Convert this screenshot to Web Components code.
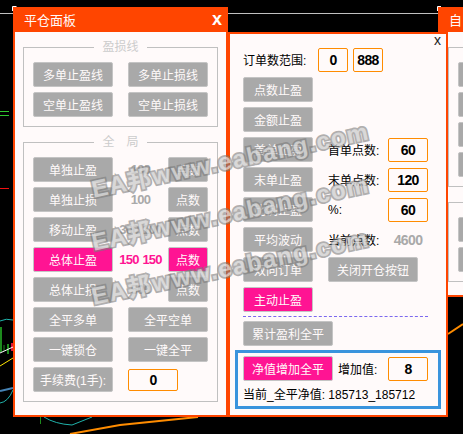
<!DOCTYPE html>
<html lang="zh">
<head>
<meta charset="utf-8">
<title>平仓面板</title>
<style>
html, body { margin: 0; padding: 0; width: 463px; height: 434px; overflow: hidden; background: #000; }
body { position: relative; font: 12px "Liberation Sans", "Noto Sans CJK SC", sans-serif; }
</style>
</head>
<body>
<chart-bg></chart-bg>

<ea-window title="自" style="left:438px;top:7px;width:25px;height:290px;border-right:0;">
    <ea-group>
        <ea-row><ea-btn w="80"></ea-btn></ea-row>
        <ea-row><ea-btn w="80"></ea-btn></ea-row>
        <ea-row><ea-btn w="80"></ea-btn></ea-row>
        <ea-row><ea-btn w="80"></ea-btn></ea-row>
    </ea-group>
    <ea-group>
        <ea-row><ea-btn w="80"></ea-btn></ea-row>
        <ea-row><ea-btn w="80"></ea-btn></ea-row>
    </ea-group>
</ea-window>

<ea-window title="平仓面板" closer="x" style="left:13px;top:7px;width:215px;height:410px;">
    <ea-group legend="盈损线">
        <ea-row><ea-btn w="80">多单止盈线</ea-btn><ea-btn w="80">多单止损线</ea-btn></ea-row>
        <ea-row><ea-btn w="80">空单止盈线</ea-btn><ea-btn w="80">空单止损线</ea-btn></ea-row>
    </ea-group>
    <ea-group legend="全　局">
        <ea-row><ea-btn w="80">单独止盈</ea-btn><ea-val>100</ea-val><ea-btn w="40">点数</ea-btn></ea-row>
        <ea-row><ea-btn w="80">单独止损</ea-btn><ea-val>100</ea-val><ea-btn w="40">点数</ea-btn></ea-row>
        <ea-row><ea-btn w="80">移动止盈</ea-btn><ea-val>300 100</ea-val><ea-btn w="40">点数</ea-btn></ea-row>
        <ea-row><ea-btn w="80" on>总体止盈</ea-btn><ea-val on>150 150</ea-val><ea-btn w="40" on>点数</ea-btn></ea-row>
        <ea-row><ea-btn w="80">总体止损</ea-btn><ea-val>500</ea-val><ea-btn w="40">点数</ea-btn></ea-row>
        <ea-row><ea-btn w="80">全平多单</ea-btn><ea-btn w="80">全平空单</ea-btn></ea-row>
        <ea-row><ea-btn w="80">一键锁仓</ea-btn><ea-btn w="80">一键全平</ea-btn></ea-row>
        <ea-row><ea-btn w="80">手续费(1手):</ea-btn><ea-num w="50" h="22">0</ea-num></ea-row>
    </ea-group>
</ea-window>

<ea-side style="left:228px;top:32px;width:220px;height:385px;">
    <ea-row><ea-label w="60">订单数范围:</ea-label><ea-num w="30">0</ea-num><ea-num w="30" style="margin-left:-10px">888</ea-num></ea-row>
    <ea-row><ea-btn w="70">点数止盈</ea-btn></ea-row>
    <ea-row><ea-btn w="70">金额止盈</ea-btn></ea-row>
    <ea-row><ea-btn w="70">首单止盈</ea-btn><ea-label w="45">首单点数:</ea-label><ea-num w="40">60</ea-num></ea-row>
    <ea-row><ea-btn w="70">末单止盈</ea-btn><ea-label w="45">末单点数:</ea-label><ea-num w="40">120</ea-num></ea-row>
    <ea-row><ea-btn w="70">比例止盈</ea-btn><ea-label w="45">%:</ea-label><ea-num w="40">60</ea-num></ea-row>
    <ea-row><ea-btn w="70">平均波动</ea-btn><ea-label w="45">当前点数:</ea-label><ea-val style="flex:none;width:40px;margin:0;font-size:14px;letter-spacing:-.6px">4600</ea-val></ea-row>
    <ea-row><ea-btn w="70">双向订单</ea-btn><ea-btn w="90">关闭开仓按钮</ea-btn></ea-row>
    <ea-row><ea-btn w="70" on>主动止盈</ea-btn></ea-row>
    <ea-dash></ea-dash>
    <ea-row><ea-btn w="90">累计盈利全平</ea-btn></ea-row>
    <ea-bluebox>
        <ea-row style="gap:5px"><ea-btn w="90" on>净值增加全平</ea-btn><ea-label w="45">增加值:</ea-label><ea-num w="40">8</ea-num></ea-row>
        <ea-row><ea-label w="190">当前_全平净值: 185713_185712</ea-label></ea-row>
    </ea-bluebox>
</ea-side>

<ea-watermark></ea-watermark>

<script>
// fondo del grafico: solo lineas sueltas alrededor de los paneles
customElements.define("chart-bg", class extends HTMLElement {
    connectedCallback() {
        this.attachShadow({ mode: 'open' }).innerHTML = `
            <style>
                :host { position: absolute; left: 0; top: 0; width: 463px; height: 434px; display: block; }
                svg { display: block; }
            </style>
            <svg width="463" height="434" viewBox="0 0 463 434" fill="none">
                <path d="M0 13.5H438" stroke="#c0c0c0"/>
                <path d="M12.5 11V6.5H16.5M437.5 11V6.5H441" stroke="#fff"/>
                <path d="M0 111.5H9M0 115.5H9" stroke="#2fc52f"/>
                <path d="M0 188.5H9" stroke="#f01010"/>
                <path d="M0 321 Q6 318 13 320" stroke="#20b2aa"/>
                <path d="M1 327V352M8 344V354" stroke="#1d8a1d" stroke-width="2"/>
                <path d="M4 345V351" stroke="#1d8a1d"/>
                <path d="M12 343V351" stroke="#dc143c" stroke-width="2"/>
                <path d="M0 353L13 347" stroke="#fff"/>
                <path d="M0 366L13 358" stroke="#ffe600"/>
                <path d="M0 391L13 388" stroke="#4682b4" stroke-width="2"/>
                <path d="M0 403Q8 402 13 390" stroke="#20b2aa"/>
                <path d="M40.5 417V424" stroke="#1d8a1d"/>
                <path d="M44 417Q55 424 72 425L92 417" stroke="#20b2aa"/>
                <path d="M70 434L120 425L198 417" stroke="#ff8c00" stroke-width="2"/>
                <path d="M448 334L463 324" stroke="#ff8c00" stroke-width="2"/>
            </svg>`;
    }
});

customElements.define("ea-window", class extends HTMLElement {
    connectedCallback() {
        const titulo = this.getAttribute("title") || "";
        const closer = this.getAttribute("closer") || "";
        this.removeAttribute("title");
        this.attachShadow({ mode: 'open' }).innerHTML = `
            <style>
                :host { position: absolute; display: flex; flex-direction: column; box-sizing: border-box; background: #fffafa; border: 2px solid #ff4500; border-top: 0; overflow: hidden; }
                .bar { flex: none; height: 25px; margin: 0 -2px; padding: 0 6px 0 11px; background: #ff4500; color: #fffafa; display: flex; align-items: center; justify-content: space-between; font-size: 13px; white-space: nowrap; }
                .x { font: bold 18px "Liberation Sans", sans-serif; color: #fff; line-height: 25px; }
                .body { flex: 1; display: flex; flex-direction: column; gap: 7px; padding: 7px 8px 0; }
            </style>
            <div class="bar"><span>${titulo}</span><span class="x">${closer}</span></div>
            <div class="body"><slot></slot></div>`;
    }
});

customElements.define("ea-side", class extends HTMLElement {
    connectedCallback() {
        this.attachShadow({ mode: 'open' }).innerHTML = `
            <style>
                :host { position: absolute; display: flex; flex-direction: column; gap: 5px; box-sizing: border-box; padding: 13px 0 0 13px; background: #fffafa; border: 2px solid #ff4500; }
                .x { position: absolute; right: 5px; top: -1px; font: 14px/14px "Liberation Sans", sans-serif; color: #222; }
            </style>
            <span class="x">x</span>
            <slot></slot>`;
    }
});

customElements.define("ea-group", class extends HTMLElement {
    connectedCallback() {
        const legend = this.getAttribute("legend") || "";
        this.attachShadow({ mode: 'open' }).innerHTML = `
            <style>
                :host { display: block; width: 195px; flex: none; }
                fieldset { margin: 0; padding: 7px 9px 9px; border: 1px solid #c0c0c0; display: flex; flex-direction: column; gap: 5px; min-width: 0; }
                legend { margin: 0 auto; padding: 0 8.5px; height: 16px; line-height: 16px; min-width: 36px; font-size: 12px; color: #ccc; }
            </style>
            <fieldset><legend>${legend}</legend><slot></slot></fieldset>`;
    }
});

customElements.define("ea-row", class extends HTMLElement {
    connectedCallback() {
        this.attachShadow({ mode: 'open' }).innerHTML = `
            <style>
                :host { display: flex; align-items: center; gap: 15px; height: 25px; flex: none; }
            </style>
            <slot></slot>`;
    }
});

customElements.define("ea-btn", class extends HTMLElement {
    connectedCallback() {
        const w = this.getAttribute("w") || 80;
        const on = this.hasAttribute("on");
        this.attachShadow({ mode: 'open' }).innerHTML = `
            <style>
                :host { display: flex; align-items: center; justify-content: center; box-sizing: border-box; flex: none; width: ${w}px; height: 25px; border: 1px solid #c4c4c4; border-radius: 2px; background: ${on ? "#ff1493" : "#a9a9a9"}; color: #fffafa; font-size: 12px; white-space: nowrap; }
            </style>
            <slot></slot>`;
    }
});

customElements.define("ea-val", class extends HTMLElement {
    connectedCallback() {
        const on = this.hasAttribute("on");
        this.attachShadow({ mode: 'open' }).innerHTML = `
            <style>
                :host { display: block; flex: 1; margin: 0 -15px; text-align: center; font-weight: bold; font-size: 13px; letter-spacing: -.8px; word-spacing: 1px; white-space: nowrap; color: ${on ? "#ff1493" : "#a9a9a9"}; }
            </style>
            <slot></slot>`;
    }
});

customElements.define("ea-num", class extends HTMLElement {
    connectedCallback() {
        const w = this.getAttribute("w") || 40;
        const h = this.getAttribute("h") || 24;
        this.attachShadow({ mode: 'open' }).innerHTML = `
            <style>
                :host { display: flex; align-items: center; justify-content: center; box-sizing: border-box; flex: none; width: ${w}px; height: ${h}px; border: 1px solid #ff8c00; border-radius: 2px; background: #fffafa; color: #000; font-size: 14px; letter-spacing: -.6px; font-weight: bold; }
            </style>
            <slot></slot>`;
    }
});

customElements.define("ea-label", class extends HTMLElement {
    connectedCallback() {
        const w = this.getAttribute("w") || 45;
        this.attachShadow({ mode: 'open' }).innerHTML = `
            <style>
                :host { display: block; flex: none; width: ${w}px; color: #000; font-size: 12px; white-space: nowrap; }
            </style>
            <slot></slot>`;
    }
});

customElements.define("ea-dash", class extends HTMLElement {
    connectedCallback() {
        this.attachShadow({ mode: 'open' }).innerHTML = `
            <style>
                :host { display: block; flex: none; width: 185px; height: 0; margin: -1px 0; border-top: 1px dashed #7b68ee; }
            </style>`;
    }
});

customElements.define("ea-bluebox", class extends HTMLElement {
    connectedCallback() {
        this.attachShadow({ mode: 'open' }).innerHTML = `
            <style>
                :host { display: block; flex: none; box-sizing: border-box; width: 206px; height: 59px; margin: -1px 0 0 -8px; padding: 3px 5px 0; border: 3px solid #3a94dd; background: #fffafa; }
            </style>
            <slot></slot>`;
    }
});

customElements.define("ea-watermark", class extends HTMLElement {
    connectedCallback() {
        const linea = (y) => `<span class="ln" style="top:${y}px">EA邦www.eabang.com</span>`;
        this.attachShadow({ mode: 'open' }).innerHTML = `
            <style>
                :host { position: absolute; left: 0; top: 0; width: 463px; height: 434px; display: block; pointer-events: none; overflow: hidden; }
                .ln { position: absolute; left: 92px; margin-top: -15px; transform-origin: 0 50%; transform: rotate(-12deg); font: bold 24px/30px "Liberation Sans", "Noto Sans CJK SC", sans-serif; letter-spacing: 1.4px; white-space: nowrap; color: rgba(245,245,245,.6); -webkit-text-stroke: 3.5px rgba(125,125,125,.6); paint-order: stroke fill; }
            </style>
            ${linea(190)}${linea(243)}${linea(297)}`;
    }
});
</script>
</body>
</html>
